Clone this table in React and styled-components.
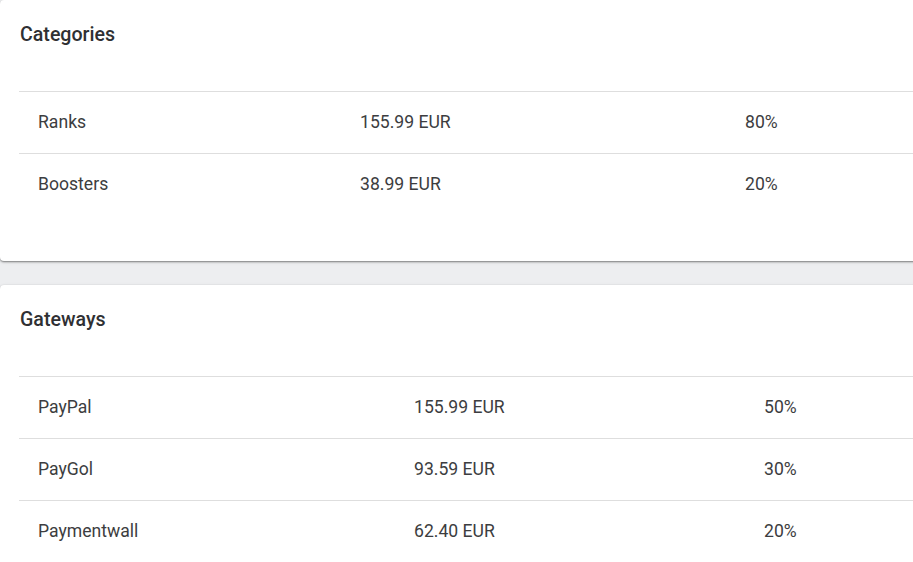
import React from 'react';
import styled, { createGlobalStyle } from 'styled-components';

const GlobalStyle = createGlobalStyle`
  html, body {
    margin: 0;
    padding: 0;
    background: #edeef0;
    overflow: hidden;
  }
  body {
    font-family: Roboto, "Liberation Sans", Arial, sans-serif;
    color: #333;
  }
`;

const Page = styled.div`
  display: flex;
  flex-direction: column;
  gap: 24px;
  width: calc(100% + 30px);
`;

const Card = styled.section`
  background: #fff;
  border-radius: 4px;
  box-shadow: 0 1px 2px rgba(0, 0, 0, 0.45), 0 1px 4px rgba(0, 0, 0, 0.08);
  padding: 23px 0 46px 19px;
`;

const Title = styled.h2`
  margin: 0 0 44px 1px;
  font-size: 19.6px;
  line-height: 24px;
  font-weight: 500;
  color: #2f3033;
`;

const Table = styled.table`
  width: 100%;
  border-collapse: collapse;
  table-layout: fixed;
`;

const Row = styled.tr`
  border-top: 1px solid #dedede;
`;

const Cell = styled.td`
  height: 60px;
  padding: 0 0 1px 19px;
  font-size: 17.6px;
  color: #3c3d40;
  vertical-align: middle;
  white-space: nowrap;
`;

const categories = [
  ['Ranks', '155.99 EUR', '80%'],
  ['Boosters', '38.99 EUR', '20%'],
];

const gateways = [
  ['PayPal', '155.99 EUR', '50%'],
  ['PayGol', '93.59 EUR', '30%'],
  ['Paymentwall', '62.40 EUR', '20%'],
];

const StatsCard = ({ title, rows, cols }) => (
  <Card>
    <Title>{title}</Title>
    <Table>
      <colgroup>
        {cols.map((w, i) => (
          <col key={i} style={{ width: w }} />
        ))}
        <col />
      </colgroup>
      <tbody>
        {rows.map((r) => (
          <Row key={r[0]}>
            {r.map((c, i) => (
              <Cell key={i}>{c}</Cell>
            ))}
          </Row>
        ))}
      </tbody>
    </Table>
  </Card>
);

export default function App() {
  return (
    <>
      <GlobalStyle />
      <Page>
        <StatsCard title="Categories" rows={categories} cols={[322, 385]} />
        <StatsCard title="Gateways" rows={gateways} cols={[376, 350]} />
      </Page>
    </>
  );
}
